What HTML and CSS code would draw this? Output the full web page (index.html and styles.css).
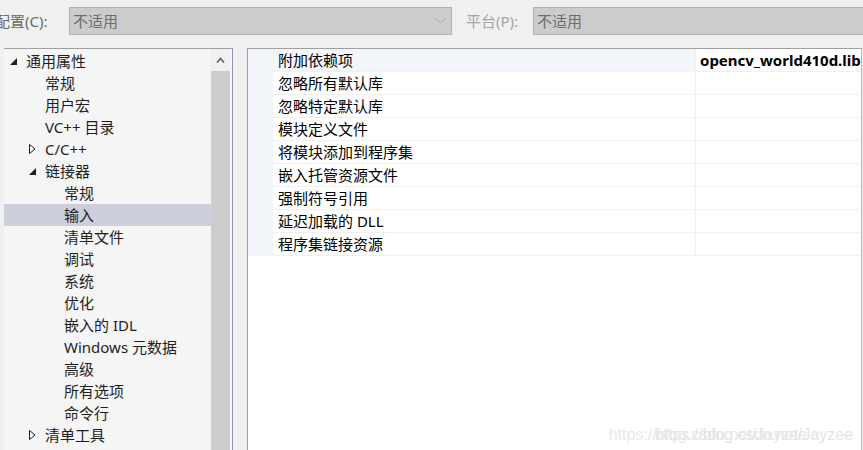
FILE: index.html
```html
<!DOCTYPE html>
<html lang="zh-CN">
  <head>
    <meta charset="utf-8">
    <title>属性页</title>
    <link rel="stylesheet" href="styles.css">
  </head>
  <body>
    <div class="toolbar">
      <label class="field-label cfg">配置(C):</label>
      <div class="combo wide">
        <span>不适用</span>
        <svg class="drop" width="11" height="6" viewBox="0 0 11 6"><polyline points="0.5,0.5 5.5,5 10.5,0.5" fill="none" stroke="#a8a8a8" stroke-width="1"/></svg>
      </div>
      <label class="field-label plat">平台(P):</label>
      <div class="combo rest">
        <span>不适用</span>
      </div>
    </div>

    <div class="main">
      <div class="tree-pane">
        <ul class="tree">
          <li class="node"><span class="tw"><svg class="open" width="7" height="7" viewBox="0 0 7 7"><polygon points="7,0 7,7 0,7" fill="#1e1e1e"/></svg></span>通用属性</li>
          <li class="node lvl1"><span class="tw"></span>常规</li>
          <li class="node lvl1"><span class="tw"></span>用户宏</li>
          <li class="node lvl1"><span class="tw"></span>VC++ 目录</li>
          <li class="node"><span class="tw lvl1-arrow"><svg class="closed" width="7" height="10" viewBox="0 0 7 10"><polygon points="0.5,0.5 6,5 0.5,9.5" fill="none" stroke="#1e1e1e" stroke-width="1"/></svg></span>C/C++</li>
          <li class="node"><span class="tw lvl1-arrow"><svg class="open" width="7" height="7" viewBox="0 0 7 7"><polygon points="7,0 7,7 0,7" fill="#1e1e1e"/></svg></span>链接器</li>
          <li class="node lvl2"><span class="tw"></span>常规</li>
          <li class="node lvl2 selected"><span class="tw"></span>输入</li>
          <li class="node lvl2"><span class="tw"></span>清单文件</li>
          <li class="node lvl2"><span class="tw"></span>调试</li>
          <li class="node lvl2"><span class="tw"></span>系统</li>
          <li class="node lvl2"><span class="tw"></span>优化</li>
          <li class="node lvl2"><span class="tw"></span>嵌入的 IDL</li>
          <li class="node lvl2"><span class="tw"></span>Windows 元数据</li>
          <li class="node lvl2"><span class="tw"></span>高级</li>
          <li class="node lvl2"><span class="tw"></span>所有选项</li>
          <li class="node lvl2"><span class="tw"></span>命令行</li>
          <li class="node"><span class="tw lvl1-arrow"><svg class="closed" width="7" height="10" viewBox="0 0 7 10"><polygon points="0.5,0.5 6,5 0.5,9.5" fill="none" stroke="#1e1e1e" stroke-width="1"/></svg></span>清单工具</li>
        </ul>
        <div class="vscroll">
          <div class="up">
            <svg width="9" height="6" viewBox="0 0 9 6"><polyline points="1,5.5 4.5,1.5 8,5.5" fill="none" stroke="#606060" stroke-width="1.6"/></svg>
          </div>
          <div class="thumb"></div>
        </div>
      </div>

      <div class="grid-pane">
        <div class="props">
          <div class="prop current"><span class="gutter"></span><span class="name">附加依赖项</span><span class="value">opencv_world410d.lib</span></div>
          <div class="prop"><span class="gutter"></span><span class="name">忽略所有默认库</span><span class="value"></span></div>
          <div class="prop"><span class="gutter"></span><span class="name">忽略特定默认库</span><span class="value"></span></div>
          <div class="prop"><span class="gutter"></span><span class="name">模块定义文件</span><span class="value"></span></div>
          <div class="prop"><span class="gutter"></span><span class="name">将模块添加到程序集</span><span class="value"></span></div>
          <div class="prop"><span class="gutter"></span><span class="name">嵌入托管资源文件</span><span class="value"></span></div>
          <div class="prop"><span class="gutter"></span><span class="name">强制符号引用</span><span class="value"></span></div>
          <div class="prop"><span class="gutter"></span><span class="name">延迟加载的 DLL</span><span class="value"></span></div>
          <div class="prop"><span class="gutter"></span><span class="name">程序集链接资源</span><span class="value"></span></div>
        </div>
      </div>
    </div>

    <div class="watermark">https://blog.csdn.net/Jayzee</div>
  </body>
</html>
```

FILE: styles.css
```css
body{
  margin: 0;
  width: 863px;
  height: 450px;
  overflow: hidden;
  position: relative;
  background: #f0f0f0;
  font-family: "Noto Sans", "Noto Sans CJK SC", sans-serif;
  font-size: 15px;
  color: #1e1e1e;
}

/* Configuration / platform bar */
.toolbar{
  display: flex;
  align-items: flex-start;
  height: 48px;
  padding-top: 7px;
  box-sizing: border-box;
}

.field-label{
  line-height: 28px;
  white-space: nowrap;
  flex: none;
}

.cfg{
  margin-left: -5px;
  width: 74px;
  color: #6a6a6a;
}

.plat{
  margin-left: 14px;
  width: 67px;
  color: #a4a4a4;
}

.combo{
  height: 28px;
  box-sizing: border-box;
  background: #cccccc;
  border: 1px solid #b2b2b2;
  display: flex;
  align-items: center;
  padding-left: 3px;
  color: #6d6d6d;
  flex: none;
}

.combo span{
  line-height: 26px;
}

.wide{
  width: 383px;
}

.rest{
  width: 340px;
}

.drop{
  margin-left: auto;
  margin-right: 5px;
}

/* Main area: tree on the left, property grid on the right */
.main{
  display: flex;
  height: 402px;
  padding-left: 4px;
}

.tree-pane{
  width: 229px;
  box-sizing: border-box;
  border-top: 1px solid #a0a0a0;
  border-right: 1px solid #8d97ab;
  background: #f5f5f5;
  display: flex;
  flex: none;
}

.tree{
  list-style: none;
  margin: 0;
  padding: 1px 0 0;
  width: 207px;
  flex: none;
}

.node{
  display: flex;
  align-items: center;
  height: 22px;
  line-height: 22px;
  white-space: nowrap;
}

.lvl1{
  padding-left: 19px;
}

.lvl2{
  padding-left: 38px;
}

.tw{
  width: 22px;
  height: 22px;
  flex: none;
  display: flex;
  align-items: center;
}

.tw svg{
  margin-left: 6px;
}

.tw .open{
  margin-top: 1px;
}

/* arrow of a second-level node that still has children */
.lvl1-arrow{
  width: 41px;
}

.lvl1-arrow svg{
  margin-left: 25px;
}

.node.selected{
  background: #cccedb;
}

.vscroll{
  width: 19px;
  margin-right: 2px;
  display: flex;
  flex-direction: column;
  flex: none;
}

.vscroll .up{
  height: 22px;
  background: #f0f0f0;
  display: flex;
  align-items: center;
  justify-content: center;
}

.vscroll .thumb{
  flex: 1;
  background: #cdcdcd;
}

.grid-pane{
  margin-left: 14px;
  width: 615px;
  box-sizing: border-box;
  border-top: 1px solid #a0a0a0;
  border-left: 1px solid #a0a0a0;
  border-right: 1px solid #b8b8b8;
  background: #ffffff;
  overflow: hidden;
  flex: none;
}

.prop{
  display: grid;
  grid-template-columns: 25px 422px 1fr;
  height: 23px;
  color: #000;
}

.prop .gutter{
  background: #f2f5fa;
}

.prop .name,
.prop .value{
  line-height: 22px;
  border-bottom: 1px solid #f0f0f0;
  white-space: nowrap;
  overflow: hidden;
}

.prop .name{
  padding-left: 5px;
}

.prop .value{
  border-left: 1px solid #f0f0f0;
  padding-left: 4px;
  font-weight: bold;
}

.prop.current .name{
  background: #f2f5fa;
}

.watermark{
  position: absolute;
  right: 10px;
  bottom: 6px;
  font-family: "Liberation Sans", sans-serif;
  font-size: 16px;
  color: #e4e4e4;
  text-shadow: -46px 0 0 #e8e8e8;
}
```
